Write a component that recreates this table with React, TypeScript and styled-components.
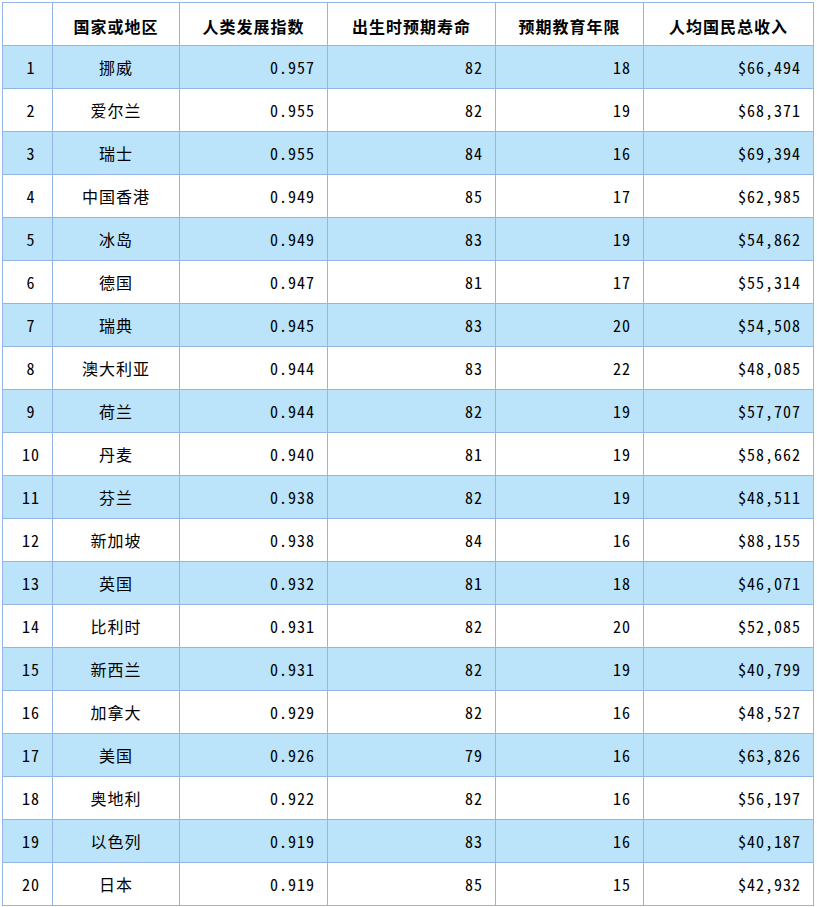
import { createGlobalStyle } from "styled-components";
import styled from "styled-components";

type Country = {
    rank: number;
    name: string;
    hdi: string;
    life: number;
    school: number;
    gni: string;
};

const data: Country[] = [
    { rank: 1, name: "挪威", hdi: "0.957", life: 82, school: 18, gni: "$66,494" },
    { rank: 2, name: "爱尔兰", hdi: "0.955", life: 82, school: 19, gni: "$68,371" },
    { rank: 3, name: "瑞士", hdi: "0.955", life: 84, school: 16, gni: "$69,394" },
    { rank: 4, name: "中国香港", hdi: "0.949", life: 85, school: 17, gni: "$62,985" },
    { rank: 5, name: "冰岛", hdi: "0.949", life: 83, school: 19, gni: "$54,862" },
    { rank: 6, name: "德国", hdi: "0.947", life: 81, school: 17, gni: "$55,314" },
    { rank: 7, name: "瑞典", hdi: "0.945", life: 83, school: 20, gni: "$54,508" },
    { rank: 8, name: "澳大利亚", hdi: "0.944", life: 83, school: 22, gni: "$48,085" },
    { rank: 9, name: "荷兰", hdi: "0.944", life: 82, school: 19, gni: "$57,707" },
    { rank: 10, name: "丹麦", hdi: "0.940", life: 81, school: 19, gni: "$58,662" },
    { rank: 11, name: "芬兰", hdi: "0.938", life: 82, school: 19, gni: "$48,511" },
    { rank: 12, name: "新加坡", hdi: "0.938", life: 84, school: 16, gni: "$88,155" },
    { rank: 13, name: "英国", hdi: "0.932", life: 81, school: 18, gni: "$46,071" },
    { rank: 14, name: "比利时", hdi: "0.931", life: 82, school: 20, gni: "$52,085" },
    { rank: 15, name: "新西兰", hdi: "0.931", life: 82, school: 19, gni: "$40,799" },
    { rank: 16, name: "加拿大", hdi: "0.929", life: 82, school: 16, gni: "$48,527" },
    { rank: 17, name: "美国", hdi: "0.926", life: 79, school: 16, gni: "$63,826" },
    { rank: 18, name: "奥地利", hdi: "0.922", life: 82, school: 16, gni: "$56,197" },
    { rank: 19, name: "以色列", hdi: "0.919", life: 83, school: 16, gni: "$40,187" },
    { rank: 20, name: "日本", hdi: "0.919", life: 85, school: 15, gni: "$42,932" },
];

const GlobalStyle = createGlobalStyle`
body {
    margin: 0;
    background: #ffffff;
    font-family: "Noto Sans CJK SC", "Noto Sans", sans-serif;
}
`

export default function App() {
    return (
        <Page>
            <GlobalStyle />
            <Table>
                <colgroup>
                    <col style={{ width: 50 }} />
                    <col style={{ width: 127 }} />
                    <col style={{ width: 148 }} />
                    <col style={{ width: 168 }} />
                    <col style={{ width: 148 }} />
                    <col style={{ width: 170 }} />
                </colgroup>
                <thead>
                    <tr>
                        <HeadCell></HeadCell>
                        <HeadCell>国家或地区</HeadCell>
                        <HeadCell>人类发展指数</HeadCell>
                        <HeadCell>出生时预期寿命</HeadCell>
                        <HeadCell>预期教育年限</HeadCell>
                        <HeadCell>人均国民总收入</HeadCell>
                    </tr>
                </thead>
                <tbody>
                    {data.map((c) => (
                        <Row key={c.rank} $striped={c.rank % 2 === 1}>
                            <RankCell>{c.rank}</RankCell>
                            <NameCell>{c.name}</NameCell>
                            <NumCell>{c.hdi}</NumCell>
                            <NumCell>{c.life}</NumCell>
                            <NumCell>{c.school}</NumCell>
                            <NumCell>{c.gni}</NumCell>
                        </Row>
                    ))}
                </tbody>
            </Table>
        </Page>
    )
}

const Page = styled.div`
padding: 2px 0 0 2px;
`

const Table = styled.table`
width: 811px;
table-layout: fixed;
border-collapse: collapse;
border: 1px solid #94b6e6;
font-size: 16px;
letter-spacing: 1px;
color: #000000;
font-feature-settings: "hwid" 1;
`

const HeadCell = styled.th`
height: 43px;
padding: 3px 0 0 0;
box-sizing: border-box;
border: 1px solid #94b6e6;
font-weight: bold;
text-align: center;
background: #ffffff;
`

const Row = styled.tr<{ $striped: boolean }>`
background: ${(p) => (p.$striped ? "#bbe4fa" : "#ffffff")};
`

const Cell = styled.td`
height: 43px;
padding: 0;
box-sizing: border-box;
border: 1px solid #94b6e6;
`

const RankCell = styled(Cell)`
text-align: center;
padding-left: 7px;
`

const NameCell = styled(Cell)`
text-align: center;
`

const NumCell = styled(Cell)`
text-align: right;
padding-right: 12px;
`
